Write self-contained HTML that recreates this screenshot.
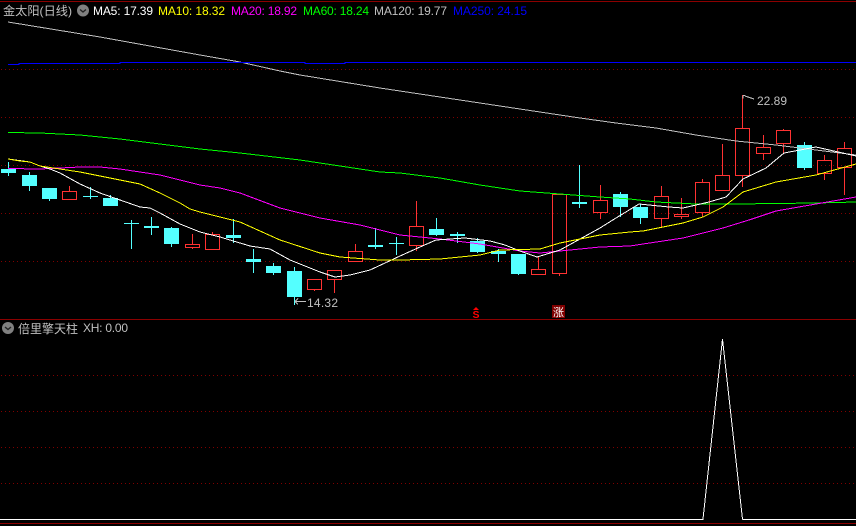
<!DOCTYPE html>
<html><head><meta charset="utf-8"><style>
html,body{margin:0;padding:0;background:#000;width:856px;height:526px;overflow:hidden}
svg{display:block}
text{font-family:"Liberation Sans","Noto Sans CJK SC",sans-serif;font-size:12px}
</style></head><body>
<svg width="856" height="526" viewBox="0 0 856 526" xmlns="http://www.w3.org/2000/svg">
<rect width="856" height="526" fill="#000"/>
<g stroke="#800000" stroke-width="1" stroke-dasharray="1 3" shape-rendering="crispEdges">
<path d="M1 69.5H856M1 117.5H856M1 165.5H856M1 213.5H856M1 261.5H856M1 375.5H856M1 411.5H856M1 447.5H856M1 483.5H856"/>
</g>
<g stroke="#8b0000" stroke-width="1" shape-rendering="crispEdges">
<path d="M0 1.5H856M0 319.5H856M0 523.5H856"/>
</g>
<!-- cyan candles -->
<g shape-rendering="crispEdges">
<path stroke="#54ffff" fill="none" d="M8.5 162V176M29.5 172V191M49.5 188V201M90.5 187V199M110.5 195V206M131.5 220V249M151.5 217V235M171.5 227V247M233.5 219V243M253.5 249V273M273.5 263V275M294.5 267V305M375.5 228V249M396.5 237V255M436.5 218V236M457.5 232V243M477.5 238V253M498.5 249V262M518.5 254V275M579.5 165V208M620.5 192V217M640.5 204V224M804.5 142V170"/>
<path fill="#54ffff" d="M1 169h15v4h-15zM22 175h15v11h-15zM42 188h15v11h-15zM83 196h15v1h-15zM103 198h15v8h-15zM124 223h15v1h-15zM144 226h15v2h-15zM164 228h15v16h-15zM226 235h15v3h-15zM246 259h15v3h-15zM266 266h15v7h-15zM287 271h15v26h-15zM368 245h15v2h-15zM389 243h15v1h-15zM429 229h15v6h-15zM450 234h15v2h-15zM470 241h15v11h-15zM491 251h15v3h-15zM511 254h15v20h-15zM572 202h15v2h-15zM613 194h15v13h-15zM633 207h15v11h-15zM797 145h15v23h-15z"/>
<!-- red candles -->
<path stroke="#ff3232" fill="none" d="M69.5 186V191M192.5 234V244M192.5 248V249M212.5 232V234M314.5 290V291M334.5 280V293M355.5 244V251M416.5 201V226M416.5 246V251M538.5 257V269M559.5 274V276M600.5 185V200M600.5 213V219M661.5 186V196M661.5 219V227M681.5 198V214M681.5 217V219M702.5 179V182M702.5 213V217M722.5 144V175M742.5 95V128M742.5 176V187M763.5 135V147M763.5 154V160M783.5 129V130M783.5 144V154M824.5 155V160M824.5 174V180M844.5 142V148M844.5 168V195
M62.5 191.5h14v8h-14zM185.5 244.5h14v3h-14zM205.5 234.5h14v15h-14zM307.5 279.5h14v10h-14zM327.5 270.5h14v9h-14zM348.5 251.5h14v10h-14zM409.5 226.5h14v19h-14zM531.5 269.5h14v5h-14zM552.5 194.5h14v79h-14zM593.5 200.5h14v12h-14zM654.5 196.5h14v22h-14zM674.5 214.5h14v2h-14zM695.5 182.5h14v30h-14zM715.5 175.5h14v15h-14zM735.5 128.5h14v47h-14zM756.5 147.5h14v6h-14zM776.5 130.5h14v13h-14zM817.5 160.5h14v13h-14zM837.5 148.5h14v19h-14z"/>
</g>
<!-- MA lines -->
<g fill="none" stroke-width="1" shape-rendering="crispEdges">
<polyline stroke="#c0c0c0" points="8,22 100,37 200,55 240,62 280,71 300,75 380,88 480,103 580,118 616,123 656,128 696,135 736,141 776,145 816,150 856,155"/>
<polyline stroke="#0000ff" points="8,64.5 19,64.5 19,63.5 120,63.5 120,62.5 305,62.5 305,63.5 345,63.5 345,62.5 856,62.5"/>
<polyline stroke="#00ff00" points="8,132.5 40,133 80,135 120,139 160,144 200,149 240,153 300,160 380,172 400,173 440,178 480,185 520,191 560,194 600,197 630,199 656,202 696,204 736,204 816,203 856,202"/>
<polyline stroke="#ff00ff" points="8,168.5 40,169 80,167 100,167 120,169 140,172 160,175 180,180 200,185 220,188 240,193 280,208 320,218 360,225 400,235 420,237 440,239 480,244 520,251 540,253 560,251 600,247 630,246 643,244 683,238 723,228 749,220 776,211 816,204 856,197"/>
<polyline stroke="#ffffff" points="8,159 30,162 40,166 50,169 60,173 80,184 100,193 120,200 140,207 150,208 160,213 180,224 200,232 220,237 250,246 270,249 290,260 320,272 335,277 350,275 370,270 400,256 420,247 436,240 450,239 465,238 490,241 505,245 520,251 537,257 560,250 600,228 616,218 639,204 669,207 683,208 709,202 726,197 743,179 766,168 784,153 816,147 856,156"/>
<polyline stroke="#ffff00" points="8,159 20,161 30,162 40,166 60,169 80,172 100,176 120,180 140,184 160,193 180,203 190,209 200,212 220,217 240,222 280,240 320,253 340,257 380,260 400,260 440,259 480,255 500,250 540,249 560,243 600,235 630,232 643,231 683,223 703,217 723,207 743,192 776,182 816,175 856,164"/>
<path stroke="#ffffff" d="M0 519.5H703L703 519 722.5 339 742.5 519 743 519.5H856"/>
</g>
<!-- legend -->
<g>
<text x="3" y="15" fill="#c0c0c0" textLength="69" lengthAdjust="spacingAndGlyphs">金太阳(日线)</text>
<circle cx="83" cy="10.5" r="6" fill="#808080"/>
<path d="M80 9.5l3 2.5 3-2.5" fill="none" stroke="#222" stroke-width="1.4"/>
<text x="93" y="15" fill="#ffffff" textLength="60">MA5: 17.39</text>
<text x="158" y="15" fill="#ffff00" textLength="67">MA10: 18.32</text>
<text x="231" y="15" fill="#ff00ff" textLength="66">MA20: 18.92</text>
<text x="303" y="15" fill="#00ff00" textLength="66">MA60: 18.24</text>
<text x="374" y="15" fill="#c0c0c0" textLength="73">MA120: 19.77</text>
<text x="453" y="15" fill="#0000ff" textLength="74">MA250: 24.15</text>
<circle cx="8" cy="328" r="6" fill="#808080"/>
<path d="M5 327l3 2.5 3-2.5" fill="none" stroke="#222" stroke-width="1.4"/>
<text x="18" y="333" fill="#c0c0c0" textLength="60" lengthAdjust="spacingAndGlyphs">倍里擎天柱</text>
<text x="83" y="332" fill="#c0c0c0" textLength="45">XH: 0.00</text>
</g>
<!-- annotations -->
<g fill="none" stroke="#c0c0c0" stroke-width="1" shape-rendering="crispEdges">
<path d="M295 301.5H306M295 301.5l3-3M295 301.5l3 3"/>
<path d="M743 95.5h2M743 95.5v3M745 96l9 3"/>
</g>
<text x="307" y="307" fill="#c0c0c0" textLength="31">14.32</text>
<text x="757" y="105" fill="#c0c0c0" textLength="30">22.89</text>
<path d="M473 310h6l-3-3z" fill="#ff0000"/>
<text x="472.5" y="318" fill="#ff0000" style="font-size:10.5px;font-weight:bold">S</text>
<rect x="552" y="305" width="13" height="13" fill="#800000"/>
<text x="553" y="316" fill="#ffffff" style="font-size:11px">涨</text>
</svg>
</body></html>
